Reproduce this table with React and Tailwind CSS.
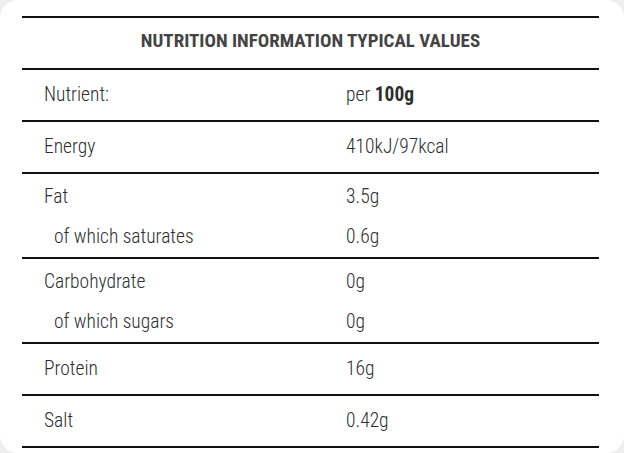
import React from "react";

const rows = [
  { lines: [["Nutrient:", <>per <span className="font-bold">100g</span></>]] },
  { lines: [["Energy", "410kJ/97kcal"]] },
  {
    lines: [
      ["Fat", "3.5g"],
      ["of which saturates", "0.6g", true],
    ],
  },
  {
    lines: [
      ["Carbohydrate", "0g"],
      ["of which sugars", "0g", true],
    ],
  },
  { lines: [["Protein", "16g"]] },
  { lines: [["Salt", "0.42g"]] },
];

const font = {
  fontFamily:
    '"Roboto Condensed", "Liberation Sans Narrow", "DejaVu Sans Condensed", sans-serif',
};

export default function App() {
  return (
    <div className="min-h-screen bg-[#eeeeee]" style={font}>
      <div className="h-[453px] rounded-[18px] bg-white pl-[22px] pr-[25px] pt-4">
        <div className="border-t-2 border-[#111]">
          {/* Cabecera */}
          <div className="flex h-[52px] items-center justify-center border-b-2 border-[#111] pb-[4px] text-[19px] font-bold uppercase text-[#444]">
            Nutrition information typical values
          </div>

          {rows.map((row, i) => (
            <div
              key={i}
              className={`border-b-2 border-[#111] ${
                row.lines.length > 1 ? "pt-[3px]" : ""
              }`}
            >
              {row.lines.map(([name, value, sub], j) => (
                <div
                  key={j}
                  className={`grid grid-cols-[302px_1fr] items-center text-[19.5px] font-light text-[#2e2e2e] ${
                    row.lines.length > 1 ? "h-10" : "h-[50px]"
                  }`}
                >
                  <div className={sub ? "pl-[32px]" : "pl-[22px]"}>{name}</div>
                  <div className="pl-[22px]">{value}</div>
                </div>
              ))}
            </div>
          ))}
        </div>
      </div>
    </div>
  );
}
